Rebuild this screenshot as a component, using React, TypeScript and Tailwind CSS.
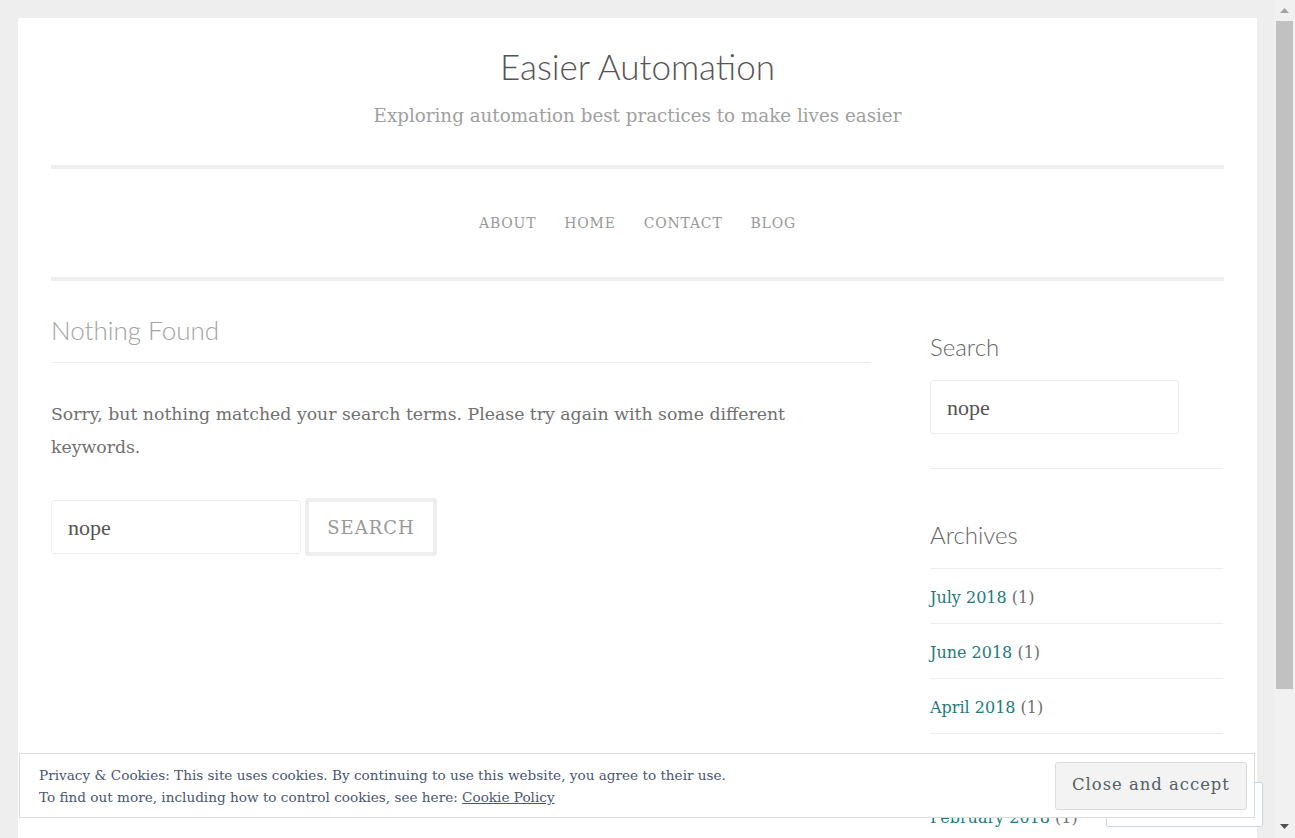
import React from "react";

const slab = { fontFamily: '"DejaVu Serif", "Liberation Serif", serif' };
const ubuntu = { fontFamily: 'Lato, "Open Sans", "Noto Sans", sans-serif' };
const inputSerif = { fontFamily: '"Liberation Serif", "DejaVu Serif", serif' };

function Scrollbar() {
  return (
    <div className="flex w-[21px] shrink-0 flex-col items-center bg-[#f1f1f1]">
      <div className="flex h-[21px] w-full items-center justify-center">
        <svg width="9" height="5" viewBox="0 0 9 5">
          <path d="M0 5 L4.5 0 L9 5 Z" fill="#a3a3a3" />
        </svg>
      </div>
      <div className="h-[668px] w-[17px] bg-[#c1c1c1]" />
      <div className="flex-1" />
      <div className="flex h-[21px] w-full items-center justify-center pb-[3px]">
        <svg width="9" height="5" viewBox="0 0 9 5">
          <path d="M0 0 L9 0 L4.5 5 Z" fill="#505050" />
        </svg>
      </div>
    </div>
  );
}

const archives = ["July 2018", "June 2018", "April 2018", "March 2018", "February 2018"];

export default function App() {
  return (
    <div className="relative flex h-[838px] w-[1295px] overflow-hidden bg-[#eeeeee]">
      <div className="min-w-0 flex-1 overflow-hidden pl-[18px] pr-[17px] pt-[18px]">
        <div className="h-[900px] bg-white px-[33px]">
          {/* Header */}
          <header className="flex flex-col items-center pt-[27px]">
            <h1 style={ubuntu} className="text-[35px] font-light leading-[42px] text-[#555555]">
              Easier Automation
            </h1>
            <p style={slab} className="mt-[15px] text-[18.3px] font-light leading-[28px] text-[#a0a0a0]">
              Exploring automation best practices to make lives easier
            </p>
          </header>
          <div className="mt-[35px] h-[4px] bg-[#eeeeee]" />
          <nav className="flex h-[108px] items-center justify-center gap-[28px] pt-[1px]">
            {["ABOUT", "HOME", "CONTACT", "BLOG"].map((n) => (
              <span key={n} style={slab} className="text-[14px] tracking-[0.8px] text-[#999999]">
                {n}
              </span>
            ))}
          </nav>
          <div className="h-[4px] bg-[#eeeeee]" />

          {/* Content */}
          <div className="flex gap-[59px]">
            <main className="w-[820px] shrink-0 pt-[33px]">
              <h2 style={ubuntu} className="border-b border-[#eeeeee] pb-[16px] text-[26px] font-light leading-[32px] text-[#a3a3a3]">
                Nothing Found
              </h2>
              <p style={slab} className="mt-[35px] text-[17.3px] font-light leading-[33px] text-[#707070]">
                Sorry, but nothing matched your search terms. Please try again with some different
                <br />
                keywords.
              </p>
              <div className="mt-[34px] flex items-center gap-[4px]">
                <div className="flex h-[54px] w-[250px] items-center rounded-[3px] border border-[#eeeeee] pl-[16px]">
                  <span style={inputSerif} className="text-[22px] text-[#555555]">nope</span>
                </div>
                <div className="flex h-[58px] w-[132px] items-center justify-center rounded-[3px] border-[4px] border-[#eeeeee]">
                  <span style={slab} className="text-[18px] tracking-[1px] text-[#999999]">SEARCH</span>
                </div>
              </div>
            </main>

            <aside className="w-[293px] shrink-0 pt-[51px]">
              <h3 style={ubuntu} className="text-[24px] font-light leading-[30px] text-[#666666]">Search</h3>
              <div className="mt-[18px] flex h-[54px] w-[249px] items-center rounded-[3px] border border-[#eeeeee] pl-[16px]">
                <span style={inputSerif} className="text-[22px] text-[#555555]">nope</span>
              </div>
              <div className="mt-[34px] h-px bg-[#eeeeee]" />
              <h3 style={ubuntu} className="mt-[51px] text-[24px] font-light leading-[30px] text-[#666666]">Archives</h3>
              <ul className="mt-[18px]">
                {archives.map((a) => (
                  <li key={a} className="flex h-[55px] items-center border-t border-[#eeeeee] pt-[3px]">
                    <span style={slab} className="text-[16px] font-light text-[#707070]">
                      <span className="text-[#1c7c7c]">{a}</span> (1)
                    </span>
                  </li>
                ))}
              </ul>
            </aside>
          </div>
        </div>
      </div>
      <Scrollbar />

      {/* Follow button behind banner */}
      <div className="absolute left-[1106px] top-[782px] h-[45px] w-[157px] rounded-[2px] border border-[#c8d7e1] bg-white" />

      {/* Cookie banner */}
      <div className="absolute left-[19px] top-[753px] flex h-[65px] w-[1236px] items-center justify-between border border-[#dcdcde] bg-white pl-[19px] pr-[7px]">
        <div style={slab} className="pt-[1px] text-[13.6px] font-light leading-[22px] text-[#4a5670]">
          <div>Privacy &amp; Cookies: This site uses cookies. By continuing to use this website, you agree to their use.</div>
          <div>
            To find out more, including how to control cookies, see here:{" "}
            <span className="underline">Cookie Policy</span>
          </div>
        </div>
        <div className="flex h-[48px] w-[192px] items-center justify-center rounded-[3px] border border-[#dcdcde] bg-[#f3f3f3]">
          <span style={slab} className="text-[16.4px] tracking-[1px] text-[#555d66]">Close and accept</span>
        </div>
      </div>
    </div>
  );
}
